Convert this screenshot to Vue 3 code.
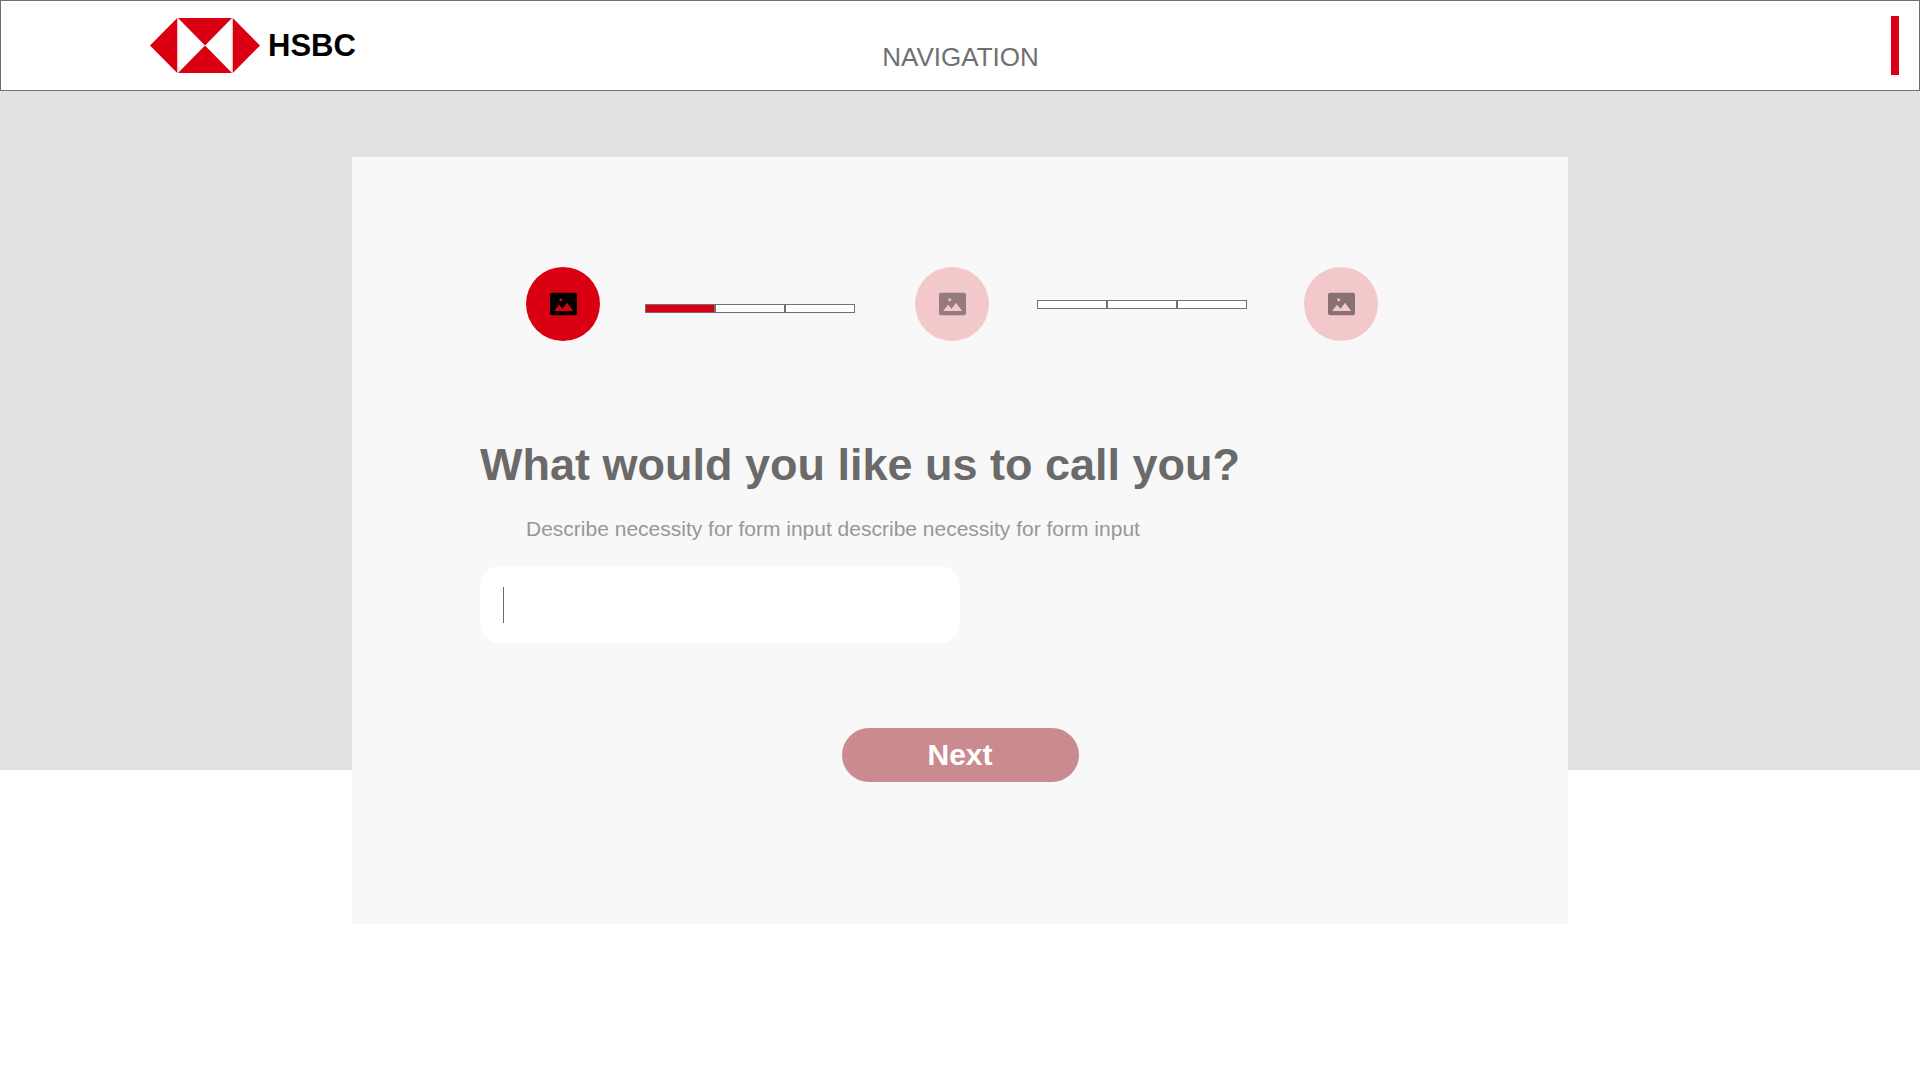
<script setup>
import { ref } from 'vue'

const name = ref('')
const steps = [
  { state: 'active', label: 'Step 1' },
  { state: 'upcoming', label: 'Step 2' },
  { state: 'last', label: 'Step 3' },
]
const connectors = [
  { kind: 'first', done: 1 },
  { kind: 'second', done: 0 },
]
</script>

<template>
  <div class="page">
    <header class="topbar">
      <a class="brand" href="#">
        <svg class="brand-mark" viewBox="0 0 110 55" aria-hidden="true">
          <path fill="#db0011" d="M0 27.5 27.2 0V55ZM110 27.5 82.8 0V55ZM28 0H82L55 27.5ZM28 55H82L55 27.5Z" />
          <path fill="none" stroke="#f3a9af" stroke-width="0.6" d="M27.8 0V55M82.2 0V55" />
        </svg>
        <span class="brand-name">HSBC</span>
      </a>
      <nav class="nav">NAVIGATION</nav>
      <span class="accent"></span>
    </header>

    <main class="stage">
      <form class="card" @submit.prevent>
        <div class="stepper">
          <template v-for="(step, i) in steps" :key="step.label">
            <div class="step" :class="step.state" role="img" :aria-label="step.label">
              <svg class="step-icon" viewBox="0 0 28 24" aria-hidden="true">
                <path
                  fill="currentColor"
                  fill-rule="evenodd"
                  d="M3.200 .8H26Q28 .8 28 2.800V21.200Q28 23.200 26 23.200H3.200Q1 23.200 1 21.200V2.800Q1 .8 3.200 .8ZM5.200 19H24.200L18 10.800 13.600 16.800 10 12.800ZM11.700 6.200A1.500 1.500 0 1 0 11.700 9.200A1.500 1.500 0 1 0 11.700 6.200Z"
                />
              </svg>
            </div>
            <div v-if="connectors[i]" class="connector" :class="connectors[i].kind">
              <span v-for="n in 3" :key="n" class="segment" :class="{ done: n <= connectors[i].done }"></span>
            </div>
          </template>
        </div>

        <div class="question">
          <h1><label for="preferred-name">What would you like us to call you?</label></h1>
          <p id="name-hint">Describe necessity for form input describe necessity for form input</p>
          <div class="field">
            <span class="caret"></span>
            <input id="preferred-name" v-model="name" type="text" aria-describedby="name-hint" />
          </div>
        </div>

        <button class="next" type="submit">Next</button>
      </form>
    </main>
  </div>
</template>

<style>
body {
  background: #fff;
}
</style>

<style scoped>
.page {
  font-family: 'Liberation Sans', Arial, Helvetica, sans-serif;
  color: #6a6a6a;
}

.page * {
  box-sizing: border-box;
}

.topbar {
  display: grid;
  grid-template-columns: 1fr auto 1fr;
  height: 91px;
  padding: 0 20px 0 149px;
  border: 1px solid #707070;
  background: #fff;
}

.brand {
  display: flex;
  align-items: center;
  gap: 8px;
  width: 220px;
  color: #000;
  text-decoration: none;
}

.brand-mark {
  width: 110px;
  height: 55px;
}

.brand-name {
  font-size: 31px;
  font-weight: 700;
}

.nav {
  align-self: end;
  margin: 0 128px 17px 0;
  color: #707070;
  font-size: 26px;
  line-height: 32px;
}

.accent {
  align-self: center;
  justify-self: end;
  width: 8px;
  height: 59px;
  background: #db0011;
}

.stage {
  padding: 66px 24px 0;
  background: linear-gradient(#e2e2e2, #e2e2e2) no-repeat top / 100% 679px;
}

.card {
  display: flex;
  flex-direction: column;
  max-width: 1216px;
  margin: 0 auto;
  padding: 110px 128px 142px;
  background: #f8f8f8;
}

.stepper {
  display: flex;
  align-items: center;
  padding-left: 46px;
}

.step {
  display: flex;
  flex: none;
  align-items: center;
  justify-content: center;
  width: 74px;
  height: 74px;
  border-radius: 50%;
  background: #f2c8ca;
}

.step.active {
  background: #db0011;
  color: #000;
}

.step.upcoming {
  color: #957b7d;
}

.step.last {
  color: #897072;
}

.step-icon {
  width: 28px;
  height: 24px;
}

.connector {
  display: flex;
  width: 210px;
}

.connector.first {
  margin: 9px 60px 0 45px;
}

.connector.second {
  margin: 0 57px 0 48px;
}

.segment {
  flex: 1;
  height: 9px;
  border: 1px solid #707070;
  background: #fff;
}

.segment.done {
  background: #db0011;
}

.question h1 {
  margin: 96px 0 0;
  font-size: 45px;
  line-height: 56px;
}

.question p {
  margin: 22px 0 23px;
  padding-left: 46px;
  color: #979797;
  font-size: 21px;
  line-height: 28px;
}

.field {
  display: flex;
  align-items: center;
  max-width: 480px;
  height: 77px;
  padding: 0 23px;
  border-radius: 20px;
  background: #fff;
}

.caret {
  width: 1px;
  height: 36px;
  background: #6a6a6a;
}

.field input {
  flex: 1;
  min-width: 0;
  height: 100%;
  padding: 0 8px;
  border: 0;
  outline: 0;
  background: transparent;
  color: inherit;
  font: inherit;
  font-size: 26px;
}

.next {
  align-self: center;
  width: 237px;
  height: 54px;
  margin-top: 85px;
  padding: 0;
  border: 0;
  border-radius: 27px;
  background: #c98b8f;
  color: #fff;
  font-family: inherit;
  font-size: 30px;
  font-weight: 700;
  line-height: 54px;
}
</style>
